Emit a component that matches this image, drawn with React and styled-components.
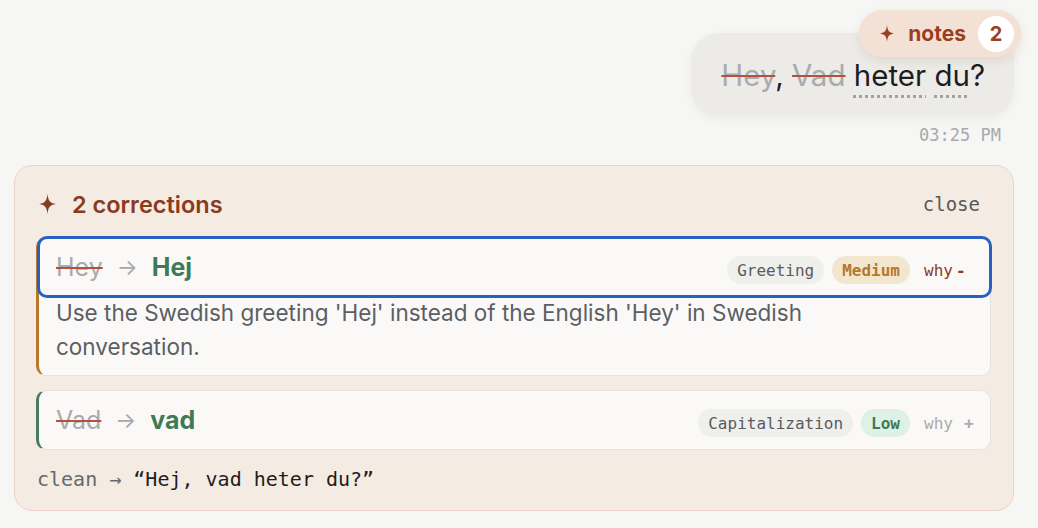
import React from "react";
import styled, { createGlobalStyle } from "styled-components";

const Global = createGlobalStyle`
  html, body { margin: 0; padding: 0; background: #f6f6f4; }
  body { font-family: Inter, "Noto Sans", sans-serif; color: #1c1d1f; }
  * { box-sizing: border-box; }
`;

const MONO = `"DejaVu Sans Mono", "Liberation Mono", monospace`;

const Page = styled.div`
  width: 1038px;
  height: 528px;
  padding: 0 24px 0 14px;
  display: flex;
  flex-direction: column;
  overflow: hidden;
`;

const MessageBlock = styled.div`
  display: flex;
  flex-direction: column;
  align-items: flex-end;
  padding-top: 33px;
`;

const BubbleWrap = styled.div`
  position: relative;
`;

const Bubble = styled.div`
  height: 83px;
  padding: 0 29px 0 30px;
  display: flex;
  align-items: center;
  border-radius: 28px;
  background: #ecebe7;
  box-shadow: 0 3px 10px rgba(60, 50, 40, 0.06);
`;

const BubbleText = styled.p`
  margin: 0;
  font-size: 29.5px;
  color: #1c1d1f;
  white-space: pre;
`;

const Struck = styled.span`
  color: #a8abb0;
  text-decoration: line-through;
  text-decoration-color: #b5503c;
  text-decoration-thickness: 2px;
`;

const Unsure = styled.span`
  text-decoration: underline dotted #9ea2ab;
  text-decoration-thickness: 3px;
  text-underline-offset: 9px;
`;

const NotesPill = styled.div`
  position: absolute;
  top: -23px;
  right: -7px;
  height: 47px;
  padding: 0 7px 0 21px;
  display: flex;
  align-items: center;
  border-radius: 24px;
  background: #f4e1d6;
  box-shadow: 0 4px 10px rgba(150, 80, 50, 0.12);
  color: #9c3f21;
  font-weight: 700;
  font-size: 21px;
`;

const NotesLabel = styled.span`
  margin-left: 14px;
  margin-right: 12px;
`;

const Count = styled.span`
  width: 36px;
  height: 36px;
  border-radius: 50%;
  background: #ffffff;
  display: flex;
  align-items: center;
  justify-content: center;
  font-size: 20px;
  font-weight: 700;
  color: #9c3f21;
`;

const Time = styled.div`
  margin-top: 9px;
  margin-right: 13px;
  font-family: ${MONO};
  font-size: 17px;
  line-height: 20px;
  color: #a7a9ad;
`;

const Panel = styled.section`
  margin-top: 20px;
  border: 1px solid #ebd4c7;
  border-radius: 18px;
  background: #f4ebe3;
  padding: 20px 22px 17px 21px;
  display: flex;
  flex-direction: column;
`;

const PanelHeader = styled.div`
  height: 36px;
  display: flex;
  align-items: center;
  padding-left: 3px;
  color: #8a3a1e;
`;

const Title = styled.h2`
  margin: 0 0 0 16px;
  font-size: 23.5px;
  font-weight: 600;
  flex: 1;
`;

const CloseButton = styled.button`
  border: 0;
  background: none;
  padding: 0 11px 0 10px;
  font-family: ${MONO};
  font-size: 19px;
  color: #585858;
`;

const CardList = styled.div`
  margin-top: 15px;
  display: flex;
  flex-direction: column;
  gap: 14px;
`;

const Card = styled.div`
  background: #faf9f7;
  border: 1px solid #e6e3df;
  border-left: 3px solid ${(p) => p.$accent};
  border-radius: 10px;
`;

const CardHead = styled.div`
  height: 58px;
  display: flex;
  align-items: center;
  padding: 0 14px 0 17px;
  border-radius: 8px;
  ${(p) => p.$focused && `outline: 3px solid #2861c6; outline-offset: -1px;`}
`;

const Change = styled.div`
  flex: 1;
  display: flex;
  align-items: center;
  font-size: 25px;
`;

const Arrow = styled.span`
  color: #a5a8ad;
  margin: 0 14px;
  font-size: 22px;
`;

const Fixed = styled.span`
  color: #3f7a56;
  font-weight: 700;
`;

const Tags = styled.div`
  display: flex;
  align-items: center;
  gap: 8px;
  padding-top: 6px;
`;

const Tag = styled.span`
  height: 28px;
  padding: 0 10px;
  border-radius: 14px;
  display: inline-flex;
  align-items: center;
  font-family: ${MONO};
  font-size: 16px;
  font-weight: ${(p) => (p.$bold ? 700 : 400)};
  background: ${(p) => p.$bg};
  color: ${(p) => p.$fg};
`;

const Why = styled.button`
  width: 58px;
  display: flex;
  align-items: center;
  border: 0;
  background: none;
  padding: 0 0 0 6px;
  font-family: ${MONO};
  font-size: 16px;
  color: ${(p) => (p.$open ? "#8a3a1e" : "#a8aaae")};
`;

const Sign = styled.span`
  margin-left: ${(p) => (p.$open ? "3px" : "11px")};
  font-weight: 700;
`;

const Explanation = styled.p`
  margin: 0;
  padding: 0 70px 11px 17px;
  font-size: 22.5px;
  line-height: 34px;
  color: #5a5f66;
`;

const Clean = styled.div`
  margin-top: 15px;
  height: 28px;
  display: flex;
  align-items: center;
  padding-left: 1px;
  font-family: ${MONO};
  font-size: 20px;
  color: #66686c;
  white-space: pre;
`;

const CleanText = styled.span`
  color: #1d1e20;
`;

const Sparkle = ({ w = 15, h = 17, color = "currentColor" }) => (
  <svg width={w} height={h} viewBox="0 0 20 24" aria-hidden="true">
    <path
      d="M10 0 C10.9 7.6 12.4 10.8 20 12 C12.4 13.2 10.9 16.4 10 24 C9.1 16.4 7.6 13.2 0 12 C7.6 10.8 9.1 7.6 10 0 Z"
      fill={color}
    />
  </svg>
);

const corrections = [
  {
    from: "Hey",
    to: "Hej",
    category: "Greeting",
    level: "Medium",
    levelBg: "#f3e6cf",
    levelFg: "#b5782b",
    accent: "#b8792f",
    open: true,
    note: "Use the Swedish greeting 'Hej' instead of the English 'Hey' in Swedish conversation.",
  },
  {
    from: "Vad",
    to: "vad",
    category: "Capitalization",
    level: "Low",
    levelBg: "#dff0e6",
    levelFg: "#3e7a55",
    accent: "#4a7c5c",
    open: false,
  },
];

export default function App() {
  return (
    <>
      <Global />
      <Page>
        <MessageBlock>
          <BubbleWrap>
            <Bubble>
              <BubbleText>
                <Struck>Hey</Struck>{", "}<Struck>Vad</Struck>{" "}
                <Unsure>heter</Unsure>{" "}<Unsure>du</Unsure>?
              </BubbleText>
            </Bubble>
            <NotesPill>
              <Sparkle w={14} h={17} />
              <NotesLabel>notes</NotesLabel>
              <Count>2</Count>
            </NotesPill>
          </BubbleWrap>
          <Time>03:25 PM</Time>
        </MessageBlock>

        <Panel>
          <PanelHeader>
            <Sparkle w={17} h={20} />
            <Title>2 corrections</Title>
            <CloseButton>close</CloseButton>
          </PanelHeader>
          <CardList>
            {corrections.map((c) => (
              <Card key={c.from} $accent={c.accent}>
                <CardHead $focused={c.open}>
                  <Change>
                    <Struck>{c.from}</Struck>
                    <Arrow>→</Arrow>
                    <Fixed>{c.to}</Fixed>
                  </Change>
                  <Tags>
                    <Tag $bg="#efefec" $fg="#5a5b5e">{c.category}</Tag>
                    <Tag $bold $bg={c.levelBg} $fg={c.levelFg}>{c.level}</Tag>
                    <Why $open={c.open}>
                      why<Sign $open={c.open}>{c.open ? "-" : "+"}</Sign>
                    </Why>
                  </Tags>
                </CardHead>
                {c.open && <Explanation>{c.note}</Explanation>}
              </Card>
            ))}
          </CardList>
          <Clean>
            clean → <CleanText>“Hej, vad heter du?”</CleanText>
          </Clean>
        </Panel>
      </Page>
    </>
  );
}
